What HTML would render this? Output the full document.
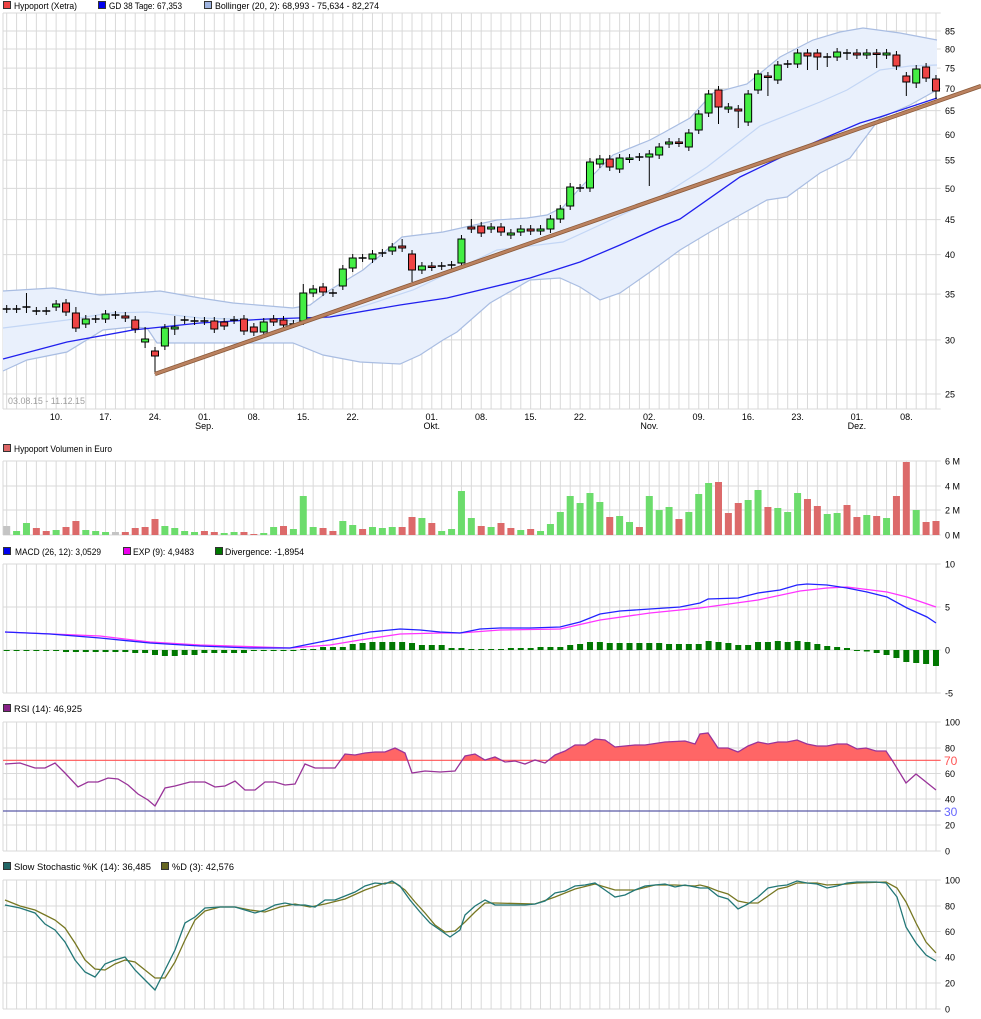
<!DOCTYPE html>
<html><head><meta charset="utf-8"><style>
html,body{margin:0;padding:0;background:#fff;}
svg{display:block;font-family:"Liberation Sans",Arial,sans-serif;}
</style></head><body>
<svg id="s" width="981" height="1019" viewBox="0 0 981 1019" xmlns="http://www.w3.org/2000/svg">
<g id="grid" stroke="#d9d9d9" stroke-width="1" fill="none"></g>
<g id="plot"></g>
<g font-size="9" fill="#000">
<!-- legends -->
<rect x="3.5" y="1.5" width="7" height="7" fill="#ee4444" stroke="#333"/>
<text x="14" y="9" textLength="63" lengthAdjust="spacingAndGlyphs">Hypoport (Xetra)</text>
<rect x="98.5" y="1.5" width="7" height="7" fill="#0000ee" stroke="#333"/>
<text x="109" y="9" textLength="73" lengthAdjust="spacingAndGlyphs">GD 38 Tage: 67,353</text>
<rect x="204.5" y="1.5" width="7" height="7" fill="#9fb4e0" stroke="#333"/>
<text x="215" y="9" textLength="164" lengthAdjust="spacingAndGlyphs">Bollinger (20, 2): 68,993 - 75,634 - 82,274</text>

<rect x="3.5" y="444.5" width="7" height="7" fill="#dd6666" stroke="#333"/>
<text x="14" y="452" textLength="98" lengthAdjust="spacingAndGlyphs">Hypoport Volumen in Euro</text>

<rect x="3.5" y="547.5" width="7" height="7" fill="#0000ee" stroke="#333"/>
<text x="15" y="555" textLength="86" lengthAdjust="spacingAndGlyphs">MACD (26, 12): 3,0529</text>
<rect x="123.5" y="547.5" width="7" height="7" fill="#ee00ee" stroke="#333"/>
<text x="133" y="555" textLength="61" lengthAdjust="spacingAndGlyphs">EXP (9): 4,9483</text>
<rect x="215.5" y="547.5" width="7" height="7" fill="#007700" stroke="#333"/>
<text x="225" y="555" textLength="79" lengthAdjust="spacingAndGlyphs">Divergence: -1,8954</text>

<rect x="3.5" y="704.5" width="7" height="7" fill="#882288" stroke="#333"/>
<text x="14" y="712" textLength="68" lengthAdjust="spacingAndGlyphs">RSI (14): 46,925</text>

<rect x="3.5" y="862.5" width="7" height="7" fill="#226666" stroke="#333"/>
<text x="14" y="870" textLength="137" lengthAdjust="spacingAndGlyphs">Slow Stochastic %K (14): 36,485</text>
<rect x="161.5" y="862.5" width="7" height="7" fill="#666622" stroke="#333"/>
<text x="172" y="870" textLength="62" lengthAdjust="spacingAndGlyphs">%D (3): 42,576</text>

<text x="8" y="404" fill="#a0a0a0" textLength="77" lengthAdjust="spacingAndGlyphs">03.08.15 - 11.12.15</text>
</g>
<g id="labels" font-size="9" fill="#000"></g>
</svg>
<script>
(function(){
var NS="http://www.w3.org/2000/svg";
var grid=document.getElementById('grid'),plot=document.getElementById('plot'),lab=document.getElementById('labels');
function el(p,t,a,txt){var e=document.createElementNS(NS,t);for(var k in a)e.setAttribute(k,a[k]);if(txt!=null)e.textContent=txt;p.appendChild(e);return e;}
function X(i){return 6.7+9.886*i;}
var L=3,R=940.7;
function vlines(y1,y2){el(grid,'line',{x1:L,y1:y1,x2:L,y2:y2});for(var i=0;i<95;i++){var x=X(i);el(grid,'line',{x1:x,y1:y1,x2:x,y2:y2});}}
function hline(y){el(grid,'line',{x1:L,y1:y,x2:R,y2:y});}
function ylab(y,t,c,fs){el(lab,'text',{x:945,y:y+3.5,fill:c||'#000','font-size':fs||9},t);}
// main panel
function PY(p){return 1348.7-296.6*Math.log(p);}
vlines(13,409);hline(13);hline(409);
for(var p=25;p<=85;p+=5){hline(PY(p));ylab(PY(p),String(p));}
// volume
vlines(461,535);[461,486,510,535].forEach(function(y,k){hline(y);ylab(y,['6 M','4 M','2 M','0 M'][k]);});
// macd
vlines(564,693);[[564,'10'],[607,'5'],[650,'0'],[693,'-5']].forEach(function(a){hline(a[0]);ylab(a[0],a[1]);});
// rsi
vlines(722,851);[[722,'100'],[748,'80'],[773.5,'60'],[799,'40'],[825,'20'],[851,'0']].forEach(function(a){hline(a[0]);ylab(a[0],a[1]);});
// stoch
vlines(880,1009);[[880,'100'],[906,'80'],[931.5,'60'],[957,'40'],[983,'20'],[1009,'0']].forEach(function(a){hline(a[0]);ylab(a[0],a[1]);});
// date labels
var dl=[[5,'10.'],[10,'17.'],[15,'24.'],[20,'01.','Sep.'],[25,'08.'],[30,'15.'],[35,'22.'],[43,'01.','Okt.'],[48,'08.'],[53,'15.'],[58,'22.'],[65,'02.','Nov.'],[70,'09.'],[75,'16.'],[80,'23.'],[86,'01.','Dez.'],[91,'08.']];
dl.forEach(function(d){el(lab,'text',{x:X(d[0]),y:420,'text-anchor':'middle'},d[1]);if(d[2])el(lab,'text',{x:X(d[0]),y:429,'text-anchor':'middle'},d[2]);});
function pts(a){return a.map(function(q){return q[0]+','+q[1];}).join(' ');}
// bollinger
var up=[[3,291],[53,288],[100,295],[147,292],[160,291],[200,298],[233,303],[293,308],[310,305],[330,290],[363,270],[402,237],[443,232],[497,220],[527,218],[547,215],[563,207],[580,188],[613,155],[650,140],[663,133],[690,118],[713,93],[747,84],[780,57],[813,40],[840,32],[863,28],[900,33],[937,40]];
var lo=[[3,371],[27,360],[67,352],[103,330],[133,327],[147,328],[157,343],[200,343],[293,343],[323,355],[360,362],[400,364],[420,355],[443,340],[457,332],[490,303],[530,280],[560,278],[580,287],[600,300],[620,293],[650,272],[680,250],[710,232],[740,215],[767,200],[787,197],[820,173],[850,158],[880,118],[910,105],[937,90]];
var mid=[[3,328],[67,320],[110,313],[147,312],[200,318],[300,321],[330,317],[413,290],[497,250],[563,242],[600,225],[660,197],[707,167],[760,126],[820,102],[847,90],[880,70],[910,66],[937,65]];
el(plot,'polygon',{points:pts(up.concat(lo.slice().reverse())),fill:'#e9f0fc'});
el(plot,'polyline',{points:pts(up),fill:'none',stroke:'#a9bde2','stroke-width':1.2});
el(plot,'polyline',{points:pts(lo),fill:'none',stroke:'#a9bde2','stroke-width':1.2});
el(plot,'polyline',{points:pts(mid),fill:'none',stroke:'#c3d6f5','stroke-width':1.2});
var sma=[[3,359],[67,342],[133,330],[200,323],[267,319],[330,317],[400,305],[447,298],[530,278],[580,262],[620,245],[660,227],[680,219],[740,177],[790,153],[820,140],[860,123],[880,117],[910,107],[937,98]];
el(plot,'polyline',{points:pts(sma),fill:'none',stroke:'#2020ee','stroke-width':1.3});
// candles
var C=[['d',309],['d',309],['d',307,0,293,313],['d',311],['d',311],['g',304,307],['r',303,312],['r',313,328,307,332],['g',319,324],['d',319],['g',314,319],['d',315],['r',316,318],['r',320,329],['g',339,342,327,348],['r',351,356,0,374],['g',328,346],['g',327,329,316,335],['d',320],['d',321],['d',321],['r',321,329],['r',322,326],['d',320],['r',319,331],['r',327,332],['g',322,332],['r',319,322],['r',320,325],['d',324],['g',293,321,284],['g',289,293],['r',287,292],['d',293],['g',269,286],['g',258,268],['d',258],['g',254,259],['d',253],['g',247,251],['r',246,248,239,252],['r',254,270,0,282],['g',266,270],['r',266,267],['d',266],['d',265],['g',239,263],['r',227,229,219],['r',226,233],['g',227,229],['r',227,232],['g',233,235],['g',229,232],['r',229,231],['g',229,231],['g',219,229],['g',209,219],['g',187,206],['d',188],['g',162,188],['g',159,164],['r',159,167],['g',158,169],['g',158,159],['d',157],['g',154,157,0,186],['g',147,155],['g',142,144],['r',142,143],['g',133,147],['g',114,130],['g',94,113],['r',90,107,0,124],['g',107,109],['r',109,111,0,128],['g',94,122],['g',74,90],['r',76,77,0,96],['g',65,80],['d',64],['g',53,64],['r',53,56,0,70],['r',53,57,0,70],['d',57,0,0,67],['g',52,57],['d',53,0,0,60],['r',53,55],['g',53,55],['r',53,54,0,68],['g',53,55],['r',55,66],['r',76,82,0,96],['g',69,83,0,88],['r',67,78],['r',79,91,0,99]];
C.forEach(function(c,i){var x=X(i),t=c[1],b=c[2]||c[1],h=c[3]||(t-4),l=c[4]||(b+4);
 if(c[0]=='d'){el(plot,'line',{x1:x,y1:h,x2:x,y2:l,stroke:'#000'});el(plot,'line',{x1:x-4,y1:t,x2:x+4,y2:t,stroke:'#000','stroke-width':1.5});}
 else{el(plot,'line',{x1:x,y1:h,x2:x,y2:l,stroke:'#000'});el(plot,'rect',{x:x-3.5,y:t,width:7,height:Math.max(b-t,1.5),fill:c[0]=='g'?'#44ee44':'#ee4444',stroke:'#000','stroke-width':1});}
});
// trendline
el(plot,'line',{x1:155,y1:374,x2:981,y2:86,stroke:'#8a5a3a','stroke-width':4.2});
el(plot,'line',{x1:155,y1:374,x2:981,y2:86,stroke:'#bb8260','stroke-width':2.6});
// volume
var V=[[g0='s',526],['g',531],['g',523],['r',528],['r',531],['g',530],['r',527],['r',521],['g',530],['g',531],['g',532],['s',532],['r',532],['r',528],['r',527],['r',519],['g',526],['g',528],['g',531],['g',532],['r',531],['r',532],['g',533],['g',532],['r',532],['r',534],['g',533],['g',527],['r',526],['g',529],['g',496],['g',527],['r',528],['r',531],['g',521],['g',525],['r',529],['g',527],['g',528],['g',527],['r',527],['r',517],['g',518],['r',523],['g',531],['g',529],['g',491],['g',518],['r',526],['g',527],['r',523],['r',528],['g',530],['r',529],['g',531],['g',524],['g',512],['g',496],['g',503],['g',493],['g',502],['r',517],['g',516],['g',522],['r',527],['g',496],['g',510],['g',507],['r',519],['g',512],['g',494],['g',483],['r',482],['r',513],['r',503],['g',500],['g',490],['r',507],['g',508],['g',512],['g',493],['r',499],['r',506],['g',514],['g',513],['r',505],['r',517],['g',515],['r',516],['g',518],['r',496],['r',462],['g',510],['r',522],['r',521]];
V.forEach(function(v,i){var x=X(i);el(plot,'rect',{x:x-3.5,y:v[1],width:7,height:535-v[1],fill:v[0]=='g'?'#6cdc6c':(v[0]=='r'?'#dc6a6a':'#c4c4c4')});});
// macd divergence
var D=[-1,-1,-1,-1,-1,-1,-2,-2,-2,-2,-2,-2,-2,-3,-3,-5,-6,-6,-5,-5,-3,-3,-3,-3,-3,-1,-1,-1,-1,-1,1,1,3,3,3,6,7,8,8,8,8,7,5,5,5,2,2,1,1,1,1,2,2,2,3,3,3,5,6,8,8,7,7,7,7,7,7,6,6,6,6,9,8,7,5,5,8,8,9,8,9,8,6,4,3,2,-1,-1.5,-3,-5,-8,-12,-13,-14,-16];
D.forEach(function(d,i){var x=X(i);el(plot,'rect',{x:x-3,y:d>0?650-d:650,width:6,height:Math.max(Math.abs(d),1),fill:'#007700'});});
var exp=[[5,632],[100,636],[150,642],[200,645],[290,648],[330,645],[360,640],[400,634],[440,633],[460,633],[500,630],[560,629],[600,620],[650,613],[700,608],[758,600],[800,591],[827,588],[847,587],[887,592],[907,597],[936,607]];
var macd=[[5,632],[50,634],[100,638],[150,643],[200,646],[250,648],[290,648],[310,644],[340,638],[370,632],[400,629],[420,630],[440,632],[460,633],[480,629],[500,628],[530,628],[560,627],[580,622],[600,614],[620,611],[650,609],[680,607],[700,603],[708,599],[738,598],[758,593],[780,590],[797,585],[807,584],[827,585],[847,588],[867,592],[887,597],[907,608],[927,617],[936,623]];
el(plot,'polyline',{points:pts(exp),fill:'none',stroke:'#ff33ff','stroke-width':1.3});
el(plot,'polyline',{points:pts(macd),fill:'none',stroke:'#2222ff','stroke-width':1.3});
// rsi
var rsi=[[5,764],[20,763],[35,768],[45,768],[55,763],[65,773],[78,787],[88,782],[98,782],[108,778],[118,779],[128,785],[138,794],[148,800],[155,806],[165,788],[175,786],[190,782],[205,782],[215,787],[225,786],[235,781],[245,790],[255,790],[265,782],[275,782],[285,785],[295,784],[305,764],[315,768],[325,768],[335,768],[345,754],[355,755],[365,753],[375,752],[385,752],[395,748],[405,753],[412,773],[425,771],[440,772],[455,771],[465,756],[475,754],[485,760],[495,757],[505,762],[515,761],[525,764],[535,760],[545,763],[555,755],[565,751],[575,745],[585,745],[595,739],[605,740],[615,747],[625,746],[635,745],[645,745],[665,742],[685,741],[695,744],[700,734],[708,733],[718,748],[728,748],[738,752],[748,746],[758,742],[768,744],[778,742],[787,742],[797,740],[807,744],[817,746],[827,746],[837,744],[847,744],[857,749],[866,748],[876,751],[886,751],[892,760],[906,783],[916,774],[926,782],[936,790]];
var cp=el(el(plot,'clipPath',{id:'cp'}),'rect',{x:0,y:700,width:981,height:60.3});
var poly=[[5,760.3]].concat(rsi).concat([[936,760.3]]);
el(plot,'polygon',{points:pts(poly),fill:'#ff6666','clip-path':'url(#cp)'});
el(plot,'line',{x1:3,y1:760.3,x2:940.7,y2:760.3,stroke:'#ff5555','stroke-width':1.2});
el(plot,'line',{x1:3,y1:811,x2:940.7,y2:811,stroke:'#5a5aa8','stroke-width':1.2});
el(plot,'polyline',{points:pts(rsi),fill:'none',stroke:'#993399','stroke-width':1.3});
el(lab,'text',{x:944,y:765,fill:'#ff5555','font-size':12},'70');
el(lab,'text',{x:944,y:816,fill:'#6666ff','font-size':12},'30');
// stochastic
var K=[[5,905],[20,908],[35,913],[45,924],[55,930],[65,942],[75,960],[85,972],[95,977],[105,964],[115,960],[125,957],[135,970],[145,980],[155,990],[165,970],[175,950],[185,923],[195,917],[205,908],[220,907],[235,907],[245,910],[255,913],[265,910],[275,905],[285,903],[295,905],[305,905],[315,907],[325,900],[335,900],[345,896],[355,892],[365,886],[375,883],[385,884],[392,881],[400,886],[410,900],[420,912],[430,923],[440,930],[450,937],[460,930],[465,915],[475,906],[485,900],[495,905],[525,905],[535,904],[545,901],[555,893],[565,891],[575,886],[585,885],[595,883],[605,890],[615,897],[625,895],[635,890],[645,886],[665,884],[675,887],[685,885],[700,888],[708,888],[718,896],[728,899],[738,909],[748,904],[758,897],[768,888],[778,886],[787,885],[797,881],[807,883],[817,884],[827,888],[837,886],[847,883],[857,882],[876,882],[886,883],[897,897],[906,927],[916,943],[926,955],[936,961]];
var Dd=[[5,900],[20,906],[35,910],[45,915],[55,920],[65,928],[75,943],[85,960],[95,969],[105,970],[115,964],[125,960],[135,962],[145,970],[155,978],[165,978],[175,962],[185,940],[195,920],[205,911],[220,907],[235,907],[250,910],[265,912],[280,907],[295,904],[310,907],[325,904],[345,899],[365,890],[385,883],[395,883],[405,890],[415,902],[425,913],[435,925],[445,932],[455,931],[465,922],[475,912],[485,903],[495,903],[535,904],[555,897],[575,889],[595,884],[615,890],[635,890],[655,885],[675,885],[695,886],[700,885],[708,887],[718,891],[728,894],[738,901],[748,903],[758,903],[768,896],[778,889],[787,887],[797,883],[817,883],[827,885],[847,884],[857,883],[886,882],[897,888],[906,902],[916,923],[926,942],[936,953]];
el(plot,'polyline',{points:pts(Dd),fill:'none',stroke:'#777722','stroke-width':1.3});
el(plot,'polyline',{points:pts(K),fill:'none',stroke:'#227777','stroke-width':1.3});
})();
</script>
</body></html>
